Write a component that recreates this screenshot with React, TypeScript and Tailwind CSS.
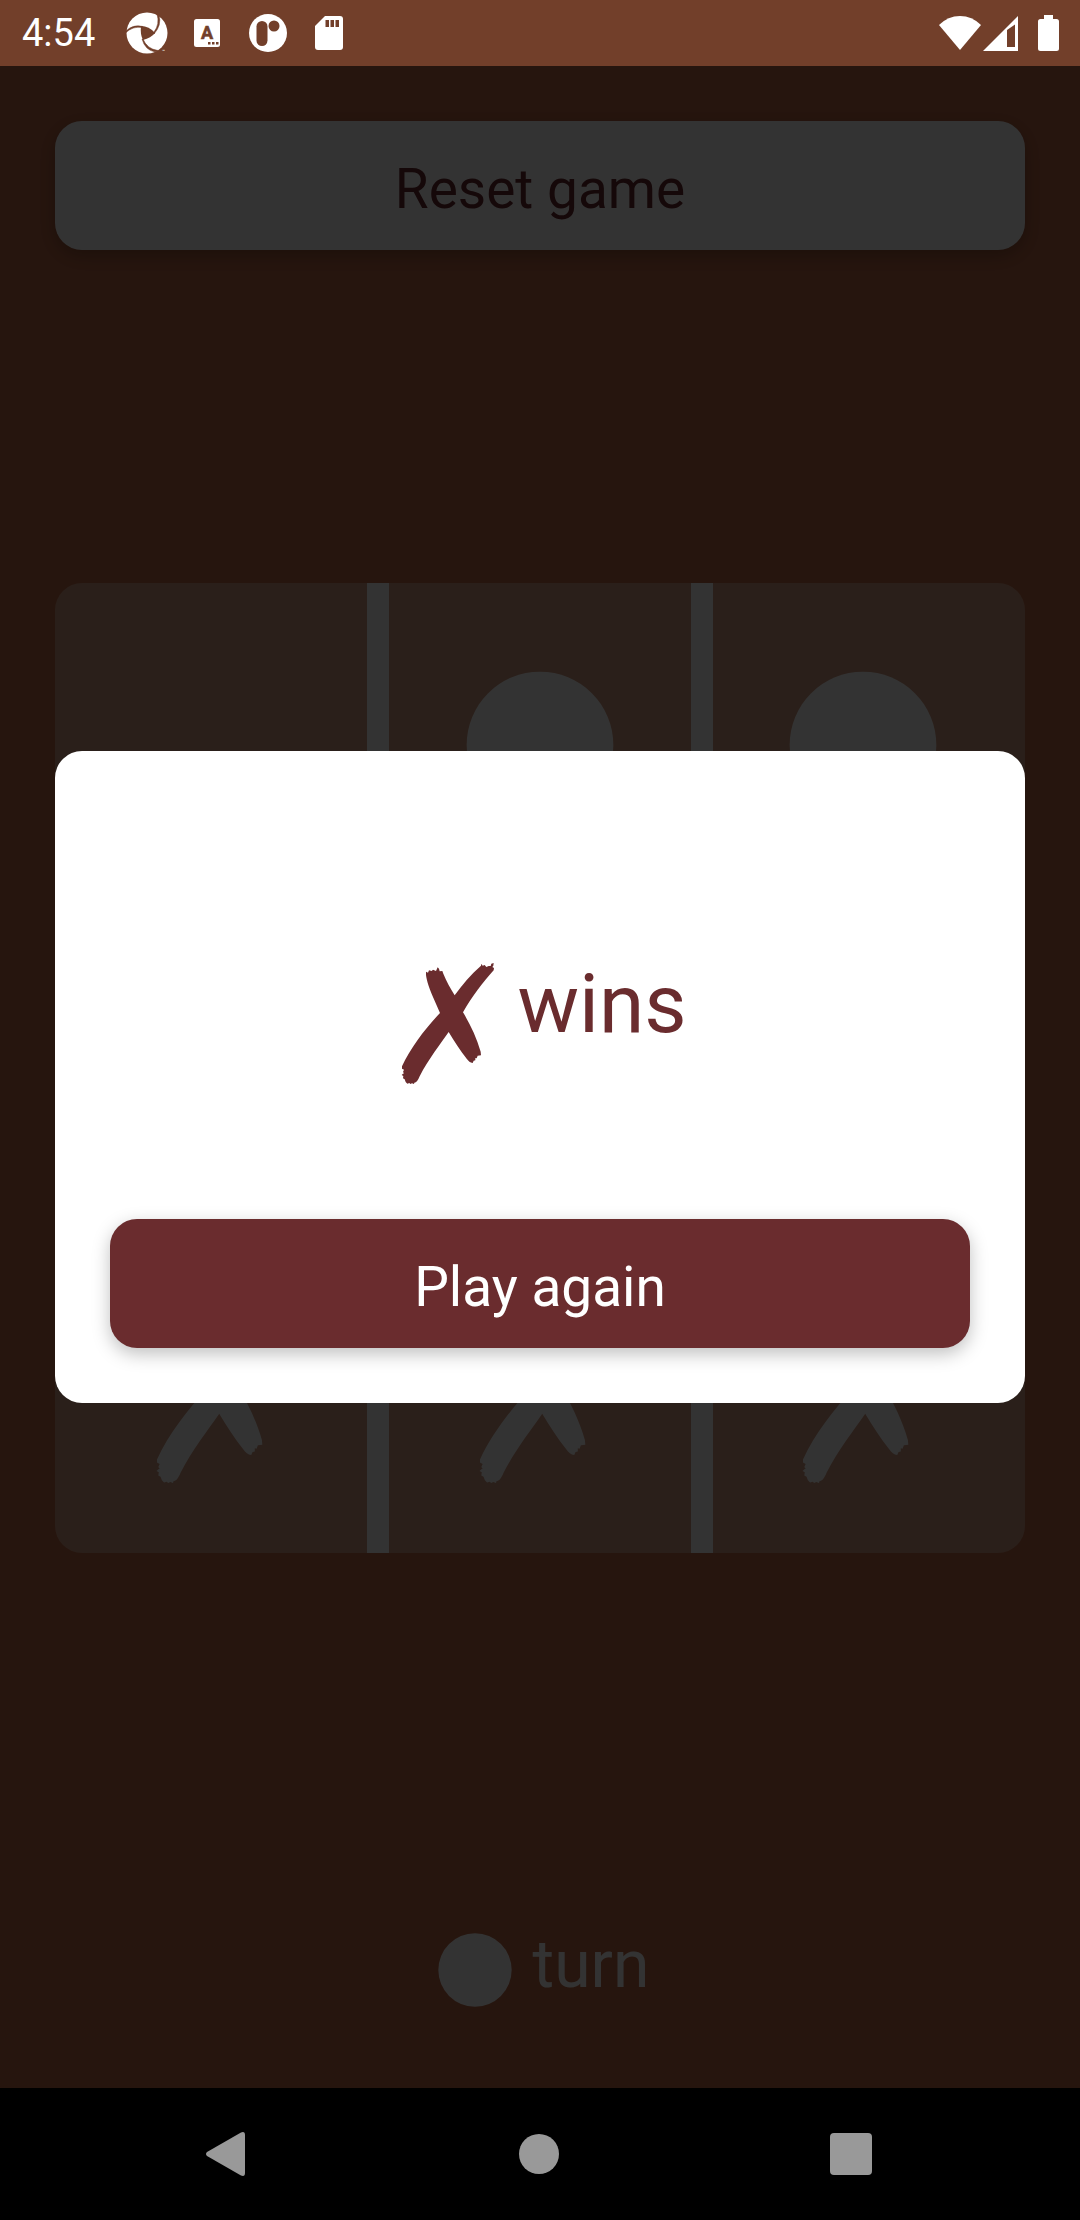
import type { ReactNode } from 'react'

type Mark = 'x' | 'o' | null

const board: Mark[] = [null, 'o', 'o', null, null, null, 'x', 'x', 'x']

// The dividers are half borders on neighbouring cells, padding keeps the marks centred
const colClasses = [
  'border-r-[11px] pl-[11px]',
  'border-x-[11px]',
  'border-l-[11px] pr-[11px]',
]
const rowClasses = [
  'border-b-[11px] pt-[11px]',
  'border-y-[11px]',
  'border-t-[11px] pb-[11px]',
]

function CrossIcon({ className }: { className?: string }) {
  return (
    <svg viewBox="3 27 396 396" fill="currentColor" className={`overflow-visible ${className}`} aria-label="X" role="img">
      <path d="M138 95 L144 98 L147 91 L155 93 L159 89 L168 93 L173 82 L177 86 L179 94 L187 93 L190 101 C199 123 211 145 224 166 C247 134 273 103 303 77 L304 71 L308 77 L314 75 L319 81 L326 78 L332 78 L334 71 L341 69 L340 77 L337 81 L342 84 L341 91 C310 126 275 170 249 217 C270 252 289 290 302 335 L303 346 L293 347 L290 355 L286 354 L286 361 L281 362 L278 369 C271 368 265 363 260 356 C240 331 222 303 206 276 C180 314 146 356 119 409 C114 421 109 428 103 428 L102 432 L96 430 L91 432 L88 429 L82 431 L77 426 L74 418 L69 415 L70 408 L65 405 L69 401 L72 400 L69 396 L72 389 L66 386 L66 379 C92 323 136 265 180 219 L158 169 C149 147 140 123 138 105 Z" />
    </svg>
  )
}

function CircleIcon({ className }: { className?: string }) {
  return (
    <svg viewBox="0 0 24 24" fill="currentColor" className={className} aria-label="O" role="img">
      <circle cx="12" cy="12" r="10" />
    </svg>
  )
}

function StatusBar() {
  return (
    <header className="flex h-[66px] items-center bg-[#723f2a] pr-[21px] pl-[22px] text-white">
      <span className="text-[38px] leading-[44px]">4:54</span>
      <svg viewBox="0 0 42 42" className="ml-[31px] size-[42px]">
        <circle cx="21" cy="21" r="20.5" fill="#fff" />
        <path d="M15 14 Q23 14 29 21 Q25 26 17 28 Q14 22 15 14Z" fill="#723f2a" />
        <path
          d="M0 19 Q7 12 17 14.500 L16 15.500 Q7 14 0 20.500Z M31 2 L33 3 Q36 13 28 22 L28 20 Q34 12 31 2Z M17 27 Q21 37 32 38.500 L29 40 Q19 38 16 27Z"
          fill="#723f2a"
          stroke="#723f2a"
          strokeWidth="0.5"
        />
        <text x="36" y="41" fontSize="5" fill="#fff">™</text>
      </svg>
      <svg viewBox="0 0 26 30" className="ml-[26px] h-[30px] w-[26px]">
        <rect y="1" width="26" height="28" rx="2.500" fill="#fff" />
        <text x="13" y="21" textAnchor="middle" fontSize="18" fontWeight="700" fill="#723f2a" stroke="#723f2a" strokeWidth="0.6">A</text>
        <path d="M14 24h2.500v2.500H14z M18 24h2.500v2.500H18z M22 24h2.500v2.500H22z" fill="#723f2a" />
      </svg>
      <svg viewBox="0 0 38 38" className="ml-[29px] size-[38px]">
        <circle cx="19" cy="19" r="19" fill="#fff" />
        <rect x="7.500" y="7" width="11" height="25" rx="5.500" fill="#723f2a" />
        <circle cx="25" cy="12" r="5.500" fill="#723f2a" />
      </svg>
      <svg viewBox="0 0 28 34" className="ml-[28px] h-[34px] w-[28px]">
        <path d="M10 0H25Q28 0 28 3V31Q28 34 25 34H3Q0 34 0 31V10Z" fill="#fff" />
        <path d="M10.500 4h3.500v7h-3.500z M15.500 4h3.500v7h-3.500z M20.500 4h3.500v7h-3.500z" fill="#723f2a" />
      </svg>
      <div className="flex-1" />
      <svg viewBox="0 0 42 34" className="h-[34px] w-[42px]">
        <path d="M0 9 Q9 0 21 0 Q33 0 42 9 L21 34Z" fill="#fff" />
      </svg>
      <svg viewBox="0 0 35 35" className="ml-[2px] size-[35px]">
        <path d="M35 0V35H0Z M24 14V31H32V8.500Z" fillRule="evenodd" fill="#fff" />
      </svg>
      <svg viewBox="0 0 21 36" className="ml-[20px] h-[36px] w-[21px]">
        <path d="M6 0H15V4H18.500Q21 4 21 6.500V33.500Q21 36 18.500 36H2.500Q0 36 0 33.500V6.500Q0 4 2.500 4H6Z" fill="#fff" />
      </svg>
    </header>
  )
}

function GameButton({ className, children }: { className: string; children: ReactNode }) {
  return (
    <button
      type="button"
      className={`block w-full rounded-[27px] pt-[35px] pb-[28px] text-center text-[55px] leading-[66px] shadow-[0_6px_18px_rgba(0,0,0,0.25)] ${className}`}
    >
      {children}
    </button>
  )
}

function Board() {
  return (
    <div className="grid aspect-square w-full grid-cols-3 grid-rows-3 overflow-hidden rounded-[27px] bg-[#d29b82]">
      {board.map((mark, i) => (
        <div
          key={i}
          className={`flex items-center justify-center border-white text-white ${colClasses[i % 3]} ${rowClasses[Math.floor(i / 3)]}`}
        >
          {mark === 'x' && <CrossIcon className="size-[176px]" />}
          {mark === 'o' && <CircleIcon className="size-[176px]" />}
        </div>
      ))}
    </div>
  )
}

function WinnerDialog() {
  return (
    <div className="absolute inset-0 flex items-center bg-black/80 px-[55px]">
      <div role="dialog" aria-modal="true" className="w-full rounded-[27px] bg-white p-[55px] text-[#6a2c2e]">
        <div className="flex items-start justify-center gap-1 pt-[143px] pr-3 pb-[138px]">
          <CrossIcon className="size-[132px]" />
          <p className="text-[82px] leading-[110px]">wins</p>
        </div>
        <GameButton className="bg-[#6a2c2e] text-white">Play again</GameButton>
      </div>
    </div>
  )
}

function NavBar() {
  return (
    <nav className="flex h-[132px] items-center justify-between bg-black pr-[208px] pl-[204px] text-[#999999]">
      <button type="button" aria-label="Back">
        <svg viewBox="0 0 44 46" fill="currentColor" className="h-[46px] w-[44px]">
          <path d="M3 21 L37 1.500 Q41 0 41 4 V42 Q41 46 37 44.500 L3 25 Q1 23 3 21Z" />
        </svg>
      </button>
      <button type="button" aria-label="Home" className="size-[40px] rounded-full bg-[#999999]" />
      <button type="button" aria-label="Recent apps" className="size-[42px] rounded-[4px] bg-[#999999]" />
    </nav>
  )
}

export default function App() {
  return (
    <div className="flex min-h-screen flex-col bg-[#be6946] font-[Roboto,sans-serif]">
      <StatusBar />
      <main className="relative flex flex-1 flex-col px-[55px] pt-[55px]">
        <GameButton className="bg-white text-[#6a2c2e]">Reset game</GameButton>
        <div className="flex flex-1 items-center">
          <Board />
        </div>
        <div className="flex items-start justify-center gap-[14px] pt-[40px] pb-[74px] text-white">
          <CircleIcon className="size-[88px]" />
          <p className="text-[66px] leading-[77px]">turn</p>
        </div>
        <WinnerDialog />
      </main>
      <NavBar />
    </div>
  )
}
